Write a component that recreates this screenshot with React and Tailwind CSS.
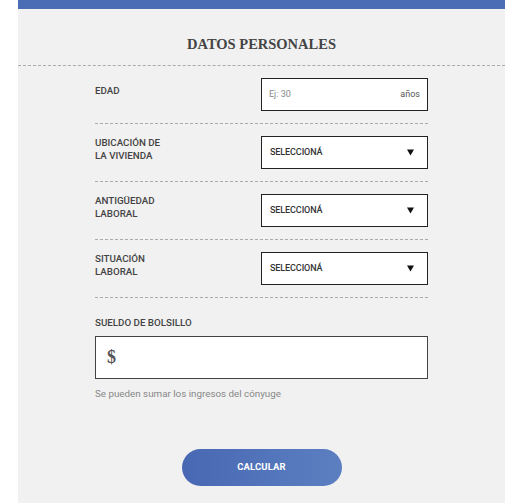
import React from "react";

const Arrow = () => (
    <svg width="7" height="7" viewBox="0 0 8 8" className="shrink-0">
        <path d="M0 0.5h8L4 7.5z" fill="#111" />
    </svg>
);

const SelectBox = () => (
    <div className="w-[167px] h-[33px] border border-[#222] bg-white flex items-center justify-between pl-2 pr-[13px]">
        <span className="text-[9px] font-medium text-[#333] tracking-[-0.1px]">SELECCIONÁ</span>
        <Arrow />
    </div>
);

const Row = ({ label, single, children }) => (
    <div className="flex justify-between pt-3 pb-3 border-b border-dashed border-[#aaa]">
        <div className={"text-[9.75px] font-medium text-[#444] leading-[13px] " + (single ? "mt-[6px]" : "mt-0")}>
            {label}
        </div>
        {children}
    </div>
);

export default function App() {
    return (
        <div className="min-h-[503px] bg-white font-['Roboto',_'Liberation_Sans',_sans-serif]">
            <div className="ml-[18px] w-[487px] bg-[#f1f1f1] pb-[25px]">
                {/* top bar */}
                <div className="h-[9px] bg-[#4a6db5]" />

                {/* title */}
                <div className="pt-[27px] pb-[13px] text-center border-b border-dashed border-[#aaa]">
                    <h1 className="font-['Liberation_Serif',_serif] font-bold text-[14.5px] leading-[16px] text-[#444]">
                        DATOS PERSONALES
                    </h1>
                </div>

                <div className="mx-[77px]">
                    <Row label="EDAD" single>
                        <div className="w-[167px] h-[33px] border border-[#222] bg-white flex items-center justify-between px-[7px]">
                            <span className="text-[9px] text-[#888]">Ej: 30</span>
                            <span className="text-[9px] text-[#555]">años</span>
                        </div>
                    </Row>
                    <Row label={<>UBICACIÓN DE<br />LA VIVIENDA</>}>
                        <SelectBox />
                    </Row>
                    <Row label={<>ANTIGÜEDAD<br />LABORAL</>}>
                        <SelectBox />
                    </Row>
                    <Row label={<>SITUACIÓN<br />LABORAL</>}>
                        <SelectBox />
                    </Row>

                    {/* sueldo */}
                    <div className="pt-[18px]">
                        <div className="text-[9.75px] font-medium text-[#444] leading-[13px]">SUELDO DE BOLSILLO</div>
                        <div className="mt-[7px] h-[43px] border border-[#444] bg-white flex items-center pl-[11px]">
                            <span className="font-['Liberation_Serif',_serif] font-bold text-[18px] text-[#555]">$</span>
                        </div>
                        <p className="mt-[9px] text-[9.8px] text-[#888] leading-[12px]">Se pueden sumar los ingresos del cónyuge</p>
                    </div>
                </div>

                {/* button */}
                <div className="flex justify-center mt-[49px]">
                    <button className="w-[160px] h-[37px] rounded-full bg-gradient-to-r from-[#4868b3] to-[#5c7fc1] text-white text-[9.5px] font-bold tracking-[0.1px]">
                        CALCULAR
                    </button>
                </div>
            </div>
        </div>
    );
}
